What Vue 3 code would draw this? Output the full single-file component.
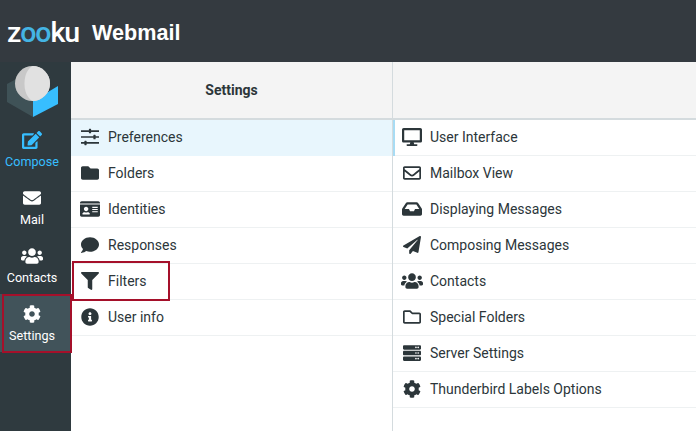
<script setup>
const paths = {
  envelope: 'M502.3 190.8c3.9-3.1 9.7-.2 9.7 4.7V400c0 26.5-21.5 48-48 48H48c-26.5 0-48-21.5-48-48V195.6c0-5 5.7-7.8 9.7-4.7 22.4 17.4 52.1 39.5 154.1 113.6 21.1 15.4 56.7 47.8 92.2 47.6 35.7.3 72-32.8 92.3-47.6 102-74.1 131.6-96.3 154-113.7zM256 320c23.2.4 56.6-29.2 73.4-41.4 132.7-96.3 142.8-104.7 173.4-128.7 5.8-4.5 9.2-11.5 9.2-18.9v-19c0-26.5-21.5-48-48-48H48C21.5 64 0 85.5 0 112v19c0 7.4 3.4 14.3 9.2 18.9 30.6 23.9 40.7 32.4 173.4 128.7 16.8 12.2 50.2 41.8 73.4 41.4z',
  filter: 'M487.976 0H24.028C2.71 0-8.047 25.866 7.058 40.971L192 225.941V432c0 7.831 3.821 15.17 10.237 19.662l80 55.98C298.02 518.69 320 507.493 320 487.98V225.941l184.947-184.97C520.021 25.896 509.338 0 487.976 0z',
  cog: 'M487.4 315.7l-42.6-24.6c4.3-23.2 4.3-47 0-70.2l42.6-24.6c4.9-2.8 7.1-8.6 5.5-14-11.1-35.6-30-67.8-54.7-94.6-3.8-4.1-10-5.1-14.8-2.3L380.8 110c-17.9-15.4-38.5-27.3-60.8-35.1V25.8c0-5.6-3.9-10.5-9.4-11.7-36.7-8.2-74.3-7.8-109.2 0-5.5 1.2-9.4 6.1-9.4 11.7V75c-22.2 7.9-42.8 19.8-60.8 35.1L88.7 85.5c-4.9-2.8-11-1.9-14.8 2.3-24.7 26.7-43.6 58.9-54.7 94.6-1.7 5.4.6 11.2 5.5 14L67.3 221c-4.3 23.2-4.3 47 0 70.2l-42.6 24.6c-4.9 2.8-7.1 8.6-5.5 14 11.1 35.6 30 67.8 54.7 94.6 3.8 4.1 10 5.1 14.8 2.3l42.6-24.6c17.9 15.4 38.5 27.3 60.8 35.1v49.2c0 5.6 3.9 10.5 9.4 11.7 36.7 8.2 74.3 7.8 109.2 0 5.5-1.2 9.4-6.1 9.4-11.7v-49.2c22.2-7.9 42.8-19.8 60.8-35.1l42.6 24.6c4.9 2.8 11 1.9 14.8-2.3 24.7-26.7 43.6-58.9 54.7-94.6 1.5-5.5-.7-11.3-5.6-14.1zM256 336c-44.1 0-80-35.9-80-80s35.9-80 80-80 80 35.9 80 80-35.9 80-80 80z',
  folder: 'M464 128H272l-64-64H48C21.49 64 0 85.49 0 112v288c0 26.51 21.49 48 48 48h416c26.51 0 48-21.49 48-48V176c0-26.51-21.49-48-48-48z',
  comment: 'M256 32C114.6 32 0 125.1 0 240c0 49.6 21.4 95 57 130.7C44.5 421.1 2.7 466 2.2 466.5c-2.2 2.3-2.8 5.7-1.5 8.7S4.8 480 8 480c66.3 0 116-31.8 140.6-51.4 32.7 12.3 69 19.4 107.4 19.4 141.4 0 256-93.1 256-208S397.4 32 256 32z',
  info: 'M256 8C119.043 8 8 119.083 8 256c0 136.997 111.043 248 248 248s248-111.003 248-248C504 119.083 392.957 8 256 8zm0 110c23.196 0 42 18.804 42 42s-18.804 42-42 42-42-18.804-42-42 18.804-42 42-42zm56 254c0 6.627-5.373 12-12 12h-88c-6.627 0-12-5.373-12-12v-24c0-6.627 5.373-12 12-12h12v-64h-12c-6.627 0-12-5.373-12-12v-24c0-6.627 5.373-12 12-12h64c6.627 0 12 5.373 12 12v100h12c6.627 0 12 5.373 12 12v24z',
  plane: 'M476 3.2L12.5 270.6c-18.1 10.4-15.8 35.6 2.2 43.2L121 358.4l287.3-253.2c5.5-4.9 13.3 2.6 8.6 8.3L176 407v80.5c0 23.6 28.5 32.9 42.5 15.8L282 426l124.6 52.2c14.2 6 30.4-2.9 33-18.2l72-432C515 7.8 493.3-6.8 476 3.2z',
  users: 'M96 224c35.3 0 64-28.7 64-64s-28.7-64-64-64-64 28.7-64 64 28.7 64 64 64zm448 0c35.3 0 64-28.7 64-64s-28.7-64-64-64-64 28.7-64 64 28.7 64 64 64zm32 32h-64c-17.6 0-33.5 7.1-45.1 18.6 40.3 22.1 68.9 62 75.1 109.4h66c17.7 0 32-14.3 32-32v-32c0-35.3-28.7-64-64-64zm-256 0c61.9 0 112-50.1 112-112S381.9 32 320 32 208 82.1 208 144s50.1 112 112 112zm76.8 32h-8.3c-20.8 10-43.9 16-68.5 16s-47.6-6-68.5-16h-8.3C179.6 288 128 339.6 128 403.2V432c0 26.5 21.5 48 48 48h288c26.5 0 48-21.5 48-48v-28.8c0-63.6-51.6-115.2-115.2-115.2zm-223.7-13.4C161.5 263.1 145.6 256 128 256H64c-35.3 0-64 28.7-64 64v32c0 17.7 14.3 32 32 32h65.9c6.3-47.4 34.9-87.3 75.2-109.4z',
  desktop: 'M528 0H48C21.5 0 0 21.5 0 48v320c0 26.5 21.5 48 48 48h192l-16 48h-72c-13.3 0-24 10.7-24 24s10.7 24 24 24h272c13.3 0 24-10.7 24-24s-10.7-24-24-24h-72l-16-48h192c26.5 0 48-21.5 48-48V48c0-26.500-21.500-48-48-48zm-16 352H64V64h448v288z',
  sliders: 'M512 400v48H160v24c0 9-7 16-16 16h-32c-9 0-16-7-16-16v-24H0v-48h96v-24c0-9 7-16 16-16h32c9 0 16 7 16 16v24zM512 232v48h-96v24c0 9-7 16-16 16h-32c-9 0-16-7-16-16v-24H0v-48h352v-24c0-9 7-16 16-16h32c9 0 16 7 16 16v24zM512 64v48H288v24c0 9-7 16-16 16h-32c-9 0-16-7-16-16v-24H0V64h224V40c0-9 7-16 16-16h32c9 0 16 7 16 16v24z',
  idcard: 'M528 32H48C21.5 32 0 53.5 0 80v16h576V80c0-26.5-21.5-48-48-48zM0 432c0 26.5 21.5 48 48 48h480c26.5 0 48-21.5 48-48V128H0v304zm352-232c0-4.400 3.600-8 8-8h144c4.400 0 8 3.600 8 8v16c0 4.400-3.600 8-8 8H360c-4.400 0-8-3.600-8-8v-16zm0 64c0-4.400 3.600-8 8-8h144c4.400 0 8 3.600 8 8v16c0 4.400-3.600 8-8 8H360c-4.400 0-8-3.600-8-8v-16zm0 64c0-4.400 3.600-8 8-8h144c4.400 0 8 3.600 8 8v16c0 4.400-3.600 8-8 8H360c-4.400 0-8-3.600-8-8v-16zM176 192c35.300 0 64 28.700 64 64s-28.700 64-64 64-64-28.700-64-64 28.700-64 64-64zM67.100 396.200C75.500 370.500 99.600 352 128 352h8.200c12.300 5.100 25.700 8 39.800 8s27.600-2.900 39.800-8h8.200c28.400 0 52.500 18.500 60.900 44.200 3.200 9.900-5.200 19.800-15.600 19.800H82.700c-10.400 0-18.800-10-15.600-19.800z',
  envOpen: 'M464 64H48C21.500 64 0 85.500 0 112v288c0 26.500 21.500 48 48 48h416c26.500 0 48-21.500 48-48V112c0-26.500-21.500-48-48-48zm0 48v40.800c-22.400 18.300-58.200 46.700-134.600 106.500-16.800 13.200-50.200 45.100-73.400 44.700-23.200.4-56.600-31.500-73.400-44.700C106.200 199.500 70.400 171.100 48 152.800V112h416zM48 400V214.400c22.900 18.300 55.400 43.900 104.900 82.600 21.900 17.200 60.100 55.200 103.100 55 42.700.2 80.500-37.200 103.100-54.900 49.500-38.800 82-64.400 104.900-82.700V400H48z',
  folderOpen: 'M464 128H272l-54.630-54.630c-6-6-14.140-9.370-22.630-9.370H48C21.490 64 0 85.490 0 112v288c0 26.510 21.490 48 48 48h416c26.510 0 48-21.490 48-48V176c0-26.510-21.490-48-48-48zm0 272H48V112h140.120l54.630 54.630c6 6 14.140 9.370 22.630 9.370H464v224z',
  inbox: 'M567.900 243.900L462.500 85.100A48 48 0 0 0 422.600 64H153.400a48 48 0 0 0-39.900 21.100L8.100 243.900A48 48 0 0 0 0 270.500V400c0 26.500 21.500 48 48 48h480c26.500 0 48-21.500 48-48V270.500a48 48 0 0 0-8.100-26.600zM162.500 128h251l85.300 128H376l-32 64H232l-32-64H77.200l85.300-128z',
  server: 'M480 160H32c-17.700 0-32-14.300-32-32V64c0-17.700 14.300-32 32-32h448c17.700 0 32 14.300 32 32v64c0 17.700-14.300 32-32 32zm-48-88c-13.300 0-24 10.700-24 24s10.700 24 24 24 24-10.700 24-24-10.700-24-24-24zm-64 0c-13.300 0-24 10.700-24 24s10.700 24 24 24 24-10.700 24-24-10.700-24-24-24zm112 248H32c-17.700 0-32-14.300-32-32v-64c0-17.700 14.300-32 32-32h448c17.700 0 32 14.300 32 32v64c0 17.700-14.300 32-32 32zm-48-88c-13.300 0-24 10.700-24 24s10.700 24 24 24 24-10.700 24-24-10.700-24-24-24zm-64 0c-13.300 0-24 10.700-24 24s10.700 24 24 24 24-10.700 24-24-10.700-24-24-24zm112 248H32c-17.700 0-32-14.300-32-32v-64c0-17.700 14.300-32 32-32h448c17.700 0 32 14.300 32 32v64c0 17.700-14.300 32-32 32zm-48-88c-13.300 0-24 10.700-24 24s10.700 24 24 24 24-10.700 24-24-10.700-24-24-24zm-64 0c-13.300 0-24 10.700-24 24s10.700 24 24 24 24-10.700 24-24-10.700-24-24-24z',
  edit: 'M402.600 83.200l90.200 90.200c3.800 3.800 3.800 10 0 13.800L274.400 405.600l-92.800 10.300c-12.400 1.400-22.900-9.100-21.500-21.500l10.300-92.800L388.800 83.200c3.800-3.800 10-3.800 13.800 0zm162-22.900l-48.800-48.800c-15.200-15.200-39.900-15.200-55.200 0l-35.400 35.400c-3.800 3.800-3.800 10 0 13.800l90.200 90.200c3.800 3.800 10 3.800 13.800 0l35.400-35.400c15.200-15.300 15.200-40 0-55.200zM384 346.200V448H64V128h229.800c3.200 0 6.200-1.300 8.500-3.500l40-40c7.600-7.600 2.200-20.500-8.500-20.500H48C21.500 64 0 85.500 0 112v352c0 26.500 21.500 48 48 48h352c26.500 0 48-21.500 48-48V306.200c0-10.700-12.900-16-20.500-8.500l-40 40c-2.200 2.300-3.500 5.300-3.500 8.500z'
}
const nav = [
  { label: 'Compose', icon: 'edit', vb: '0 0 576 512', w: 20, h: 18, cls: 'accent' },
  { label: 'Mail', icon: 'envelope', vb: '0 0 512 512', w: 18, h: 18 },
  { label: 'Contacts', icon: 'users', vb: '0 0 640 512', w: 22, h: 18 },
  { label: 'Settings', icon: 'cog', vb: '0 0 512 512', w: 18, h: 18, cls: 'active' }
]
const sections = [
  { label: 'Preferences', icon: 'sliders', vb: '0 0 512 512', w: 18, h: 18, cls: 'selected' },
  { label: 'Folders', icon: 'folder', vb: '0 0 512 512', w: 18, h: 18 },
  { label: 'Identities', icon: 'idcard', vb: '0 0 576 512', w: 20, h: 18 },
  { label: 'Responses', icon: 'comment', vb: '0 0 512 512', w: 18, h: 18 },
  { label: 'Filters', icon: 'filter', vb: '0 0 512 512', w: 18, h: 18 },
  { label: 'User info', icon: 'info', vb: '0 0 512 512', w: 18, h: 18 }
]
const options = [
  { label: 'User Interface', icon: 'desktop', vb: '0 0 576 512', w: 20, h: 18 },
  { label: 'Mailbox View', icon: 'envOpen', vb: '0 0 512 512', w: 18, h: 18 },
  { label: 'Displaying Messages', icon: 'inbox', vb: '0 0 576 512', w: 20, h: 18 },
  { label: 'Composing Messages', icon: 'plane', vb: '0 0 512 512', w: 18, h: 18 },
  { label: 'Contacts', icon: 'users', vb: '0 0 640 512', w: 22, h: 18 },
  { label: 'Special Folders', icon: 'folderOpen', vb: '0 0 512 512', w: 18, h: 18 },
  { label: 'Server Settings', icon: 'server', vb: '0 0 512 512', w: 18, h: 18 },
  { label: 'Thunderbird Labels Options', icon: 'cog', vb: '0 0 512 512', w: 18, h: 18 }
]
</script>

<template>
  <div class="app">
    <header class="top">
      <span class="brand">z<span class="blue">oo</span>ku</span>
      <span class="title">Webmail</span>
    </header>
    <div class="body">
      <aside class="side">
        <div class="logo">
          <svg width="71" height="58" viewBox="0 0 71 58">
            <path d="M7 22 20 15 33 28V55L7 40z" fill="#3f5257" />
            <path d="M33 39 58 24V42L33 55z" fill="#37beff" />
            <circle cx="32.500" cy="21.500" r="17.500" fill="#c8c8c8" />
            <path d="M32.500 4a17.500 17.500 0 0 1 0 35C27 36 24.500 29 24.500 21.500S27 7 32.500 4z" fill="#e1e1e1" />
          </svg>
        </div>
        <a v-for="n in nav" :key="n.label" class="nav" :class="n.cls">
          <svg :width="n.w" :height="n.h" :viewBox="n.vb"><path :d="paths[n.icon]" fill="currentColor" /></svg>
          <span>{{ n.label }}</span>
        </a>
        <div class="mark mark-side"></div>
      </aside>
      <section class="col col-left">
        <div class="head">Settings</div>
        <div v-for="s in sections" :key="s.label" class="row" :class="s.cls">
          <span class="ico"><svg :width="s.w" :height="s.h" :viewBox="s.vb"><path :d="paths[s.icon]" fill="currentColor" /></svg></span>
          <span>{{ s.label }}</span>
        </div>
        <div class="mark mark-filter"></div>
      </section>
      <section class="col col-right">
        <div class="head"></div>
        <div class="list">
          <div v-for="o in options" :key="o.label + o.icon" class="row">
            <span class="ico"><svg :width="o.w" :height="o.h" :viewBox="o.vb"><path :d="paths[o.icon]" fill="currentColor" /></svg></span>
            <span>{{ o.label }}</span>
          </div>
          <div class="tick"></div>
        </div>
      </section>
    </div>
  </div>
</template>

<style>
html, body { margin: 0; background: #fff; }
</style>

<style scoped>
.app { width: 696px; height: 431px; overflow: hidden; display: flex; flex-direction: column; font-family: Roboto, sans-serif; background: #fff; }
.top { height: 62px; flex: none; background: #343a40; display: flex; align-items: center; color: #fff; padding: 4px 0 0 7px; box-sizing: border-box; }
.brand { font-family: Roboto, sans-serif; font-size: 28.500px; font-weight: 500; letter-spacing: -1px; width: 85px; line-height: 1; flex: none; }
.blue { color: #44b4e4; }
.title { font-family: "Liberation Sans", sans-serif; font-size: 21.600px; font-weight: 700; }
.body { flex: 1; display: flex; min-height: 0; }
.side { width: 71px; flex: none; background: #2f3a3f; color: #fff; position: relative; }
.logo { height: 58px; overflow: hidden; }
.logo svg { display: block; }
.nav { height: 58px; display: flex; flex-direction: column; align-items: center; padding: 11px 7px 0 0; box-sizing: border-box; font-size: 12.600px; gap: 5px; line-height: 16px; }
.nav.accent { color: #37beff; }
.nav.active { background: #41535a; }
.col { position: relative; display: flex; flex-direction: column; }
.col-left { width: 322px; flex: none; border-right: 1px solid #d4dbde; box-sizing: border-box; }
.col-right { flex: 1; min-width: 0; }
.head { height: 58px; flex: none; box-sizing: border-box; background: #f4f4f4; border-bottom: 2px solid #d4dbde; display: flex; align-items: center; justify-content: center; font-size: 14px; font-weight: 700; color: #2c363a; }
.list { position: relative; }
.row { height: 36px; box-sizing: border-box; border-bottom: 1px solid #eef1f2; display: flex; align-items: center; font-size: 14px; color: #2c363a; padding: 0 0 1px 8px; }
.row.selected { background: #e8f6fd; border-bottom-color: transparent; }
.ico { width: 22px; margin-right: 7px; flex: none; display: flex; justify-content: center; }
.tick { position: absolute; left: 0; top: 0; width: 2px; height: 36px; background: #a8dcf4; }
.mark { position: absolute; border: 2px solid #a5102a; box-sizing: border-box; pointer-events: none; }
.mark-side { left: 2px; top: 232px; width: 70px; height: 59px; z-index: 2; }
.mark-filter { left: 1px; top: 199px; width: 98px; height: 40px; }
</style>
